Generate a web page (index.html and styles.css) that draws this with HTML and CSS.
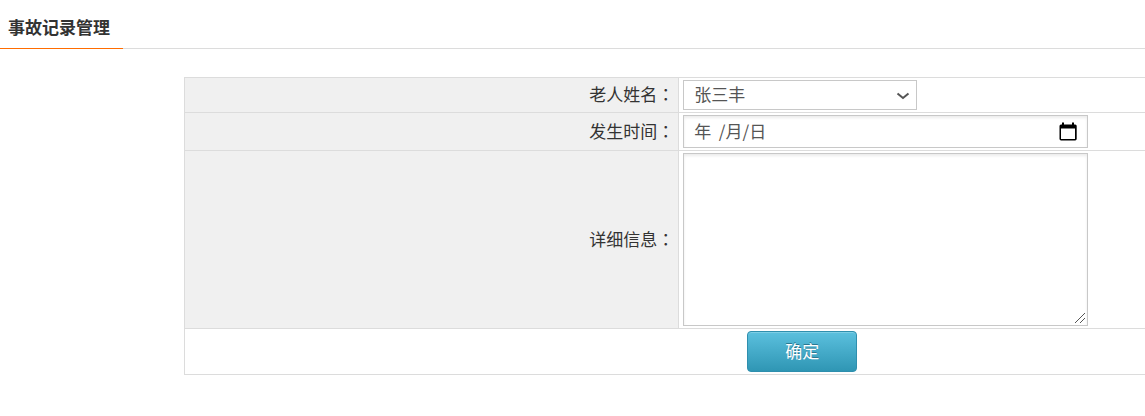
FILE: index.html
```html
<!DOCTYPE html>
<html lang="zh-CN">
<head>
<meta charset="utf-8">
<title>事故记录管理</title>
<link rel="stylesheet" href="styles.css">
</head>
<body>
<header class="page-header"><h1 class="page-title">事故记录管理</h1></header>
<form class="record-form">
  <table class="form-table">
    <tr>
      <th class="label-cell" scope="row"><label for="name">老人姓名<span class="colon" lang="zh-TW">：</span></label></th>
      <td class="field-cell">
        <div class="select-box">
          <select class="select" id="name"><option>张三丰</option></select>
          <svg class="select-arrow" viewBox="0 0 14 8" aria-hidden="true"><path d="M1.500 1.500 L7 6 L12.500 1.500"/></svg>
        </div>
      </td>
    </tr>
    <tr>
      <th class="label-cell" scope="row"><label for="date">发生时间<span class="colon" lang="zh-TW">：</span></label></th>
      <td class="field-cell">
        <div class="date-box">
          <input class="date-input" id="date" type="text" value="年  /月/日">
          <button class="date-button" type="button" aria-label="选择日期">
            <svg class="date-icon" viewBox="0 0 18 20" aria-hidden="true"><path d="M3 .5h2v2h8v-2h2v2h1.200a1.500 1.500 0 0 1 1.500 1.500v13a1.700 1.700 0 0 1-1.500 1.500H2a1.700 1.700 0 0 1-1.500-1.500V4A1.500 1.500 0 0 1 2 2.500h1zM2 6.500v10.500h14V6.500z"/></svg>
          </button>
        </div>
      </td>
    </tr>
    <tr>
      <th class="label-cell" scope="row"><label for="detail">详细信息<span class="colon" lang="zh-TW">：</span></label></th>
      <td class="field-cell"><textarea class="detail" id="detail"></textarea></td>
    </tr>
    <tr>
      <td class="action-cell" colspan="2"><button class="submit" type="submit">确定</button></td>
    </tr>
  </table>
</form>
</body>
</html>
```
FILE: styles.css
```css
* {
  box-sizing: border-box;
}

body {
  margin: 0;
  overflow-x: hidden;
  background: #fff;
  color: #333;
  font: 17px/24px "Noto Sans CJK SC", sans-serif;
}

.page-header {
  display: flex;
  border-bottom: 1px solid #dcdcdc;
}

.page-title {
  margin: 0 0 -1px;
  padding: 15px 13px 9px 8px;
  border-bottom: 1px solid #ff6c00;
  font-size: 17px;
  line-height: 24px;
  font-weight: 700;
}

.record-form {
  margin: 28px 0 0 184px;
}

/* The table runs past the right edge of narrow windows. */
.form-table {
  width: 108vw;
  table-layout: fixed;
  border-collapse: collapse;
}

.label-cell,
.field-cell,
.action-cell {
  padding: 2px 4px;
  border: 1px solid #dcdcdc;
  font-weight: 400;
}

.label-cell {
  width: 40%;
  padding: 1px 4px 3px;
  background: #f0f0f0;
  text-align: right;
}

.colon {
  font-family: "Noto Sans CJK TC", sans-serif;
}

.action-cell {
  text-align: center;
}

.select-box {
  position: relative;
  width: 234px;
}

.select,
.date-input,
.detail,
.submit {
  font: inherit;
}

.select {
  display: block;
  width: 100%;
  height: 30px;
  padding: 0 30px 2px 10px;
  border: 1px solid #c8c8c8;
  border-radius: 0;
  background: #fff;
  color: #555;
  appearance: none;
}

.select-arrow {
  position: absolute;
  top: 12px;
  right: 7px;
  width: 14px;
  height: 8px;
  fill: none;
  stroke: #555;
  stroke-width: 2;
  pointer-events: none;
}

.date-box {
  display: flex;
  align-items: center;
  width: 405px;
  height: 33px;
  padding: 0 10px;
  border: 1px solid #c8c8c8;
  box-shadow: inset 0 2px 3px #ececec;
}

.date-input {
  flex: 1;
  min-width: 0;
  padding: 0 0 2px;
  border: 0;
  background: transparent;
  color: #555;
}

.date-button {
  padding: 0;
  border: 0;
  background: transparent;
}

.date-icon {
  display: block;
  width: 18px;
  height: 20px;
}

.detail {
  display: block;
  width: 405px;
  height: 173px;
  padding: 4px 10px;
  border: 1px solid #c8c8c8;
  box-shadow: inset 0 2px 3px #ececec;
  color: #555;
}

.detail::-webkit-resizer {
  background: url("data:image/svg+xml,%3Csvg xmlns='http://www.w3.org/2000/svg' width='15' height='15'%3E%3Cpath d='M3 13L13 3M8 13L13 8' stroke='%23555'/%3E%3C/svg%3E") no-repeat;
}

.submit {
  display: block;
  width: 110px;
  height: 41px;
  margin: 0 auto;
  padding: 0 0 2px;
  border: 1px solid #2f8fae;
  border-radius: 4px;
  background: linear-gradient(#5bc0de, #2f96b4);
  box-shadow: inset 0 1px 0 #7dcee5;
  color: #fff;
  text-shadow: 0 -1px 0 #2b7891;
}
```
